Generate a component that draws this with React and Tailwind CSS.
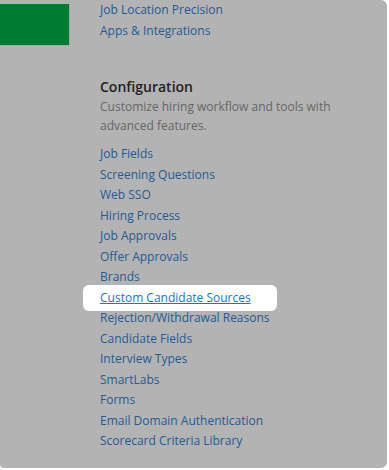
export default function App() {
  const items = [
    "Job Fields",
    "Screening Questions",
    "Web SSO",
    "Hiring Process",
    "Job Approvals",
    "Offer Approvals",
    "Brands",
    "Custom Candidate Sources",
    "Rejection/Withdrawal Reasons",
    "Candidate Fields",
    "Interview Types",
    "SmartLabs",
    "Forms",
    "Email Domain Authentication",
    "Scorecard Criteria Library",
  ];
  return (
    <div className="w-[389px] h-[470px] bg-white overflow-hidden" style={{ fontFamily: '"Open Sans", sans-serif' }}>
      <div className="w-[387px] h-[468px] bg-[#b3b3b3] rounded-tr-md rounded-br-md rounded-bl-sm flex">
        <div className="w-[100px] shrink-0 pt-[4px]">
          <div className="w-[70px] h-[42px] bg-[#007b32] border-r border-b border-[#a6a6a6]" />
        </div>
        <div className="flex flex-col text-[12px] text-[#1f5b94]">
          <div className="leading-[20.5px]">Job Location Precision</div>
          <div className="leading-[20.5px]">Apps &amp; Integrations</div>
          <div className="mt-[36px] text-[14px] font-semibold text-[#222] leading-[20px]">Configuration</div>
          <div className="text-[12px] text-[#666] leading-[19px] w-[250px]">
            Customize hiring workflow and tools with advanced features.
          </div>
          <div className="mt-[9px] flex flex-col">
            {items.map((t) =>
              t === "Custom Candidate Sources" ? (
                <div key={t} className="-ml-[17px] pl-[17px] w-[194px] bg-white rounded-md leading-[20.5px] py-[3px] -my-[3px] relative">
                  <span className="underline text-[#1d74c9]">{t}</span>
                </div>
              ) : (
                <div key={t} className="leading-[20.5px] relative">{t}</div>
              )
            )}
          </div>
        </div>
      </div>
    </div>
  );
}
